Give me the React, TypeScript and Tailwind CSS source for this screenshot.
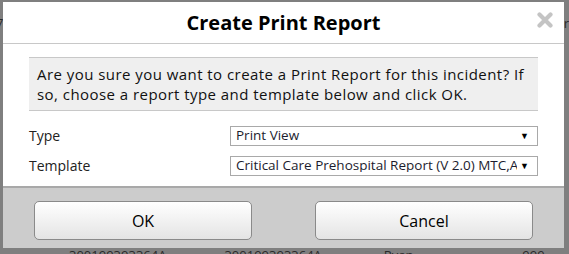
import React from "react";

const font = { fontFamily: '"Open Sans", "Noto Sans", sans-serif' };

function Select({ value }: { value: string }) {
  return (
    <div className="flex h-[20px] w-[308px] items-center border border-[#a9a9a9] bg-white pl-[5px] pr-[8px]">
      <span className="min-w-0 flex-1 overflow-hidden whitespace-nowrap text-[13.5px] leading-none text-[#1c1c2e]">{value}</span>
      <span className="ml-[3px] text-[9px] leading-none text-black">▼</span>
    </div>
  );
}

export default function App() {
  return (
    <div className="relative h-[254px] w-[569px] overflow-hidden bg-[#7f7f7f]" style={font}>
      <div className="absolute left-0 top-[249px] flex w-full text-[13px] leading-none text-[#2a2a2a]">
        <span className="ml-[69px]">300199393364A</span>
        <span className="ml-[58px]">300199393364A</span>
        <span className="ml-[62px]">Ryan Johnson</span>
        <span className="ml-[76px]">999 Scene</span>
      </div>
      <div className="absolute right-0 top-[14px] text-[13px] text-[#2a2a2a]">ar</div>
      <div className="absolute left-[-4px] top-[14px] text-[13px] text-[#2a2a2a]">7</div>

      <div className="absolute left-[3px] top-[2px] flex w-[561px] flex-col bg-white">
        <div className="relative flex h-[42px] items-center justify-center border-b border-[#c8c8c8]">
          <span className="text-[20px] font-bold text-black">Create Print Report</span>
          <svg className="absolute right-[11px] top-[10px]" width="16" height="16" viewBox="0 0 16 16">
            <path d="M2.5 2.5 L13.5 13.5 M13.5 2.5 L2.5 13.5" stroke="#c4c4c4" strokeWidth="4.2" strokeLinecap="round" />
          </svg>
        </div>
        <div className="px-[26px] pt-[13px]">
          <div className="border-y border-[#c8c8c8] bg-[#efefef] px-[8px] py-[6px] text-[15px] leading-[20px] tracking-[0.45px] text-[#111]">
            Are you sure you want to create a Print Report for this incident? If so, choose a report type and template below and click OK.
          </div>
          <div className="mt-[14px] flex items-center justify-between">
            <span className="text-[14px] text-[#222]">Type</span>
            <Select value="Print View" />
          </div>
          <div className="mt-[9px] flex items-center justify-between pb-[10px]">
            <span className="text-[14px] text-[#222]">Template</span>
            <Select value="Critical Care Prehospital Report (V 2.0) MTC,ALS" />
          </div>
        </div>
        <div className="flex h-[62px] items-start justify-between border-t-2 border-[#a8a8a8] bg-[#cccccc] px-[31px] pt-[13px]">
          <button className="h-[39px] w-[218px] rounded-[5px] border border-[#8a8a8a] bg-gradient-to-b from-white to-[#e4e4e4] text-[16px] text-black">OK</button>
          <button className="h-[39px] w-[218px] rounded-[5px] border border-[#8a8a8a] bg-gradient-to-b from-white to-[#e4e4e4] text-[16px] text-black">Cancel</button>
        </div>
      </div>
    </div>
  );
}
